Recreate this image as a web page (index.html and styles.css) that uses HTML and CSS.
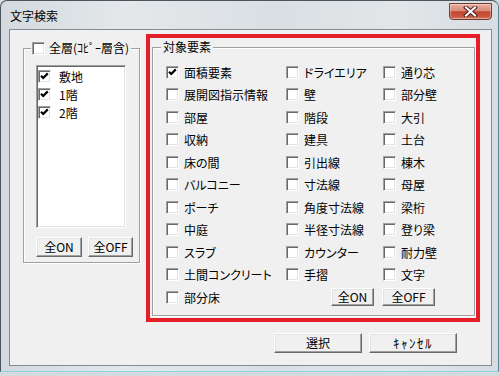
FILE: index.html
```html
<!DOCTYPE html>
<html lang="ja">
<head>
  <meta charset="UTF-8">
  <title>文字検索</title>
  <link rel="stylesheet" href="styles.css">
</head>
<body>
<div class="window">
  <div class="titlebar">
    <span class="title">文字検索</span>
    <button class="close" aria-label="閉じる">
      <svg width="15" height="11" viewBox="0 0 15 11">
        <path d="M3 1.5l9 8M12 1.5l-9 8" stroke="#4a2420" stroke-width="4" stroke-linecap="square" fill="none"/>
        <path d="M3 1.5l9 8M12 1.5l-9 8" stroke="#fff" stroke-width="2" stroke-linecap="square" fill="none"/>
      </svg>
    </button>
  </div>

  <div class="client">
    <div class="main">
      <fieldset class="group floors">
        <legend><span class="cb"></span>全層(ｺﾋﾟｰ層含)</legend>
        <ul class="listbox">
          <li><span class="cb on"><svg viewBox="0 0 11 11"><path d="M2 4.8l2.2 2.2 4.6-4.6" stroke="#000" stroke-width="2.2" fill="none"/></svg></span>敷地</li>
          <li><span class="cb on"><svg viewBox="0 0 11 11"><path d="M2 4.8l2.2 2.2 4.6-4.6" stroke="#000" stroke-width="2.2" fill="none"/></svg></span>1階</li>
          <li><span class="cb on"><svg viewBox="0 0 11 11"><path d="M2 4.8l2.2 2.2 4.6-4.6" stroke="#000" stroke-width="2.2" fill="none"/></svg></span>2階</li>
        </ul>
        <div class="btn-row">
          <button class="btn on-btn">全ON</button>
          <button class="btn off-btn">全OFF</button>
        </div>
      </fieldset>

      <div class="highlight">
        <fieldset class="group targets">
          <legend>対象要素</legend>
          <div class="grid">
            <label class="item"><span class="cb on"><svg viewBox="0 0 11 11"><path d="M2 4.8l2.2 2.2 4.6-4.6" stroke="#000" stroke-width="2.2" fill="none"/></svg></span>面積要素</label>
            <label class="item"><span class="cb"></span>ドライエリア</label>
            <label class="item"><span class="cb"></span>通り芯</label>

            <label class="item"><span class="cb"></span>展開図指示情報</label>
            <label class="item"><span class="cb"></span>壁</label>
            <label class="item"><span class="cb"></span>部分壁</label>

            <label class="item"><span class="cb"></span>部屋</label>
            <label class="item"><span class="cb"></span>階段</label>
            <label class="item"><span class="cb"></span>大引</label>

            <label class="item"><span class="cb"></span>収納</label>
            <label class="item"><span class="cb"></span>建具</label>
            <label class="item"><span class="cb"></span>土台</label>

            <label class="item"><span class="cb"></span>床の間</label>
            <label class="item"><span class="cb"></span>引出線</label>
            <label class="item"><span class="cb"></span>棟木</label>

            <label class="item"><span class="cb"></span>バルコニー</label>
            <label class="item"><span class="cb"></span>寸法線</label>
            <label class="item"><span class="cb"></span>母屋</label>

            <label class="item"><span class="cb"></span>ポーチ</label>
            <label class="item"><span class="cb"></span>角度寸法線</label>
            <label class="item"><span class="cb"></span>梁桁</label>

            <label class="item"><span class="cb"></span>中庭</label>
            <label class="item"><span class="cb"></span>半径寸法線</label>
            <label class="item"><span class="cb"></span>登り梁</label>

            <label class="item"><span class="cb"></span>スラブ</label>
            <label class="item"><span class="cb"></span>カウンター</label>
            <label class="item"><span class="cb"></span>耐力壁</label>

            <label class="item"><span class="cb"></span>土間コンクリート</label>
            <label class="item"><span class="cb"></span>手摺</label>
            <label class="item"><span class="cb"></span>文字</label>

            <label class="item"><span class="cb"></span>部分床</label>
            <div class="grid-btns">
              <button class="btn small-on">全ON</button>
              <button class="btn small-off">全OFF</button>
            </div>
          </div>
        </fieldset>
      </div>
    </div>

    <div class="actions">
      <button class="btn wide">選択</button>
      <button class="btn wide cancel">ｷｬﾝｾﾙ</button>
    </div>
  </div>
</div>
</body>
</html>
```

FILE: styles.css
```css
body {
  margin: 0;
  background-color: #d6dadd;
  font-family: "Noto Sans CJK JP", sans-serif;
  font-size: 12px;
  color: #000;
}
.window {
  width: 499px;
  height: 372px;
  box-sizing: border-box;
  border: 1px solid #4a555e;
  border-bottom-color: #8fd3e6;
  border-right-color: #5b7f95;
  border-radius: 7px 7px 0 0;
  padding: 0 6px 5px 8px;
  display: flex;
  flex-direction: column;
  background: linear-gradient(to right, #d3d9de, #e4e8eb 25%, #dadfe3 55%, #e2e6e9 80%, #d6dce1);
}
.titlebar {
  height: 28px;
  display: flex;
  align-items: center;
  justify-content: space-between;
}
.title {
  margin-left: 1px;
  margin-top: 1px;
  font-size: 12px;
  line-height: 14px;
  font-feature-settings: "palt";
}
.close {
  align-self: flex-start;
  margin-top: 2px;
  width: 43px;
  height: 17px;
  padding: 0;
  border: 1px solid #6e3a33;
  border-radius: 0 0 4px 4px;
  background: linear-gradient(#eab0a2, #d98a77 45%, #c4462f 52%, #c9583f 85%, #d8806a);
  box-shadow: inset 0 0 0 1px rgba(255, 255, 255, 0.35);
  display: flex;
  align-items: center;
  justify-content: center;
}
.client {
  flex: 1;
  background-color: #f0f0f0;
  border: 1px solid #838b92;
  display: flex;
  flex-direction: column;
}
.main {
  display: flex;
  align-items: flex-start;
  padding: 4px 0 0 13px;
  gap: 6px;
}

/* group boxes */
.group {
  margin: 0;
  border: 1px solid #a0a0a0;
  box-shadow: inset 1px 1px #fff, 1px 1px #fff;
}
.group legend {
  background-color: #f0f0f0;
  line-height: 14px;
  height: 14px;
  font-feature-settings: "palt";
}
.floors {
  margin-top: 7px;
  width: 117px;
  box-sizing: border-box;
  padding: 10px 6px 5px 12px;
}
.floors legend {
  display: flex;
  align-items: center;
  gap: 4px;
  padding: 0 2px 0 1px;
  margin-left: -5px;
}
.listbox {
  list-style: none;
  margin: 0;
  padding: 1px 0 0 1px;
  width: 90px;
  height: 163px;
  box-sizing: border-box;
  background-color: #fff;
  border: 1px solid;
  border-color: #a0a0a0 #fff #fff #a0a0a0;
  box-shadow: inset 1px 1px #696969, inset -1px -1px #e3e3e3;
}
.listbox li {
  height: 18px;
  display: flex;
  align-items: center;
  gap: 8px;
}
.btn-row {
  display: flex;
  gap: 6px;
  margin-top: 9px;
}

/* checkbox */
.cb {
  display: inline-flex;
  flex: none;
  width: 13px;
  height: 13px;
  box-sizing: border-box;
  background-color: #fff;
  border: 1px solid;
  border-color: #a0a0a0 #fff #fff #a0a0a0;
  box-shadow: inset 1px 1px #696969, inset -1px -1px #e3e3e3;
}
.cb svg {
  width: 11px;
  height: 11px;
}

/* buttons */
.btn {
  font-family: "Noto Sans CJK JP", sans-serif;
  font-size: 12px;
  line-height: 14px;
  color: #000;
  height: 20px;
  padding: 0;
  background-color: #f0f0f0;
  border: 1px solid;
  border-color: #fff #696969 #696969 #fff;
  box-shadow: inset -1px -1px #a0a0a0, inset 1px 1px #e3e3e3;
}
.on-btn {
  width: 46px;
}
.off-btn {
  width: 45px;
}

/* red highlight around 対象要素 */
.highlight {
  width: 334px;
  height: 288px;
  box-sizing: border-box;
  border: 4px solid #e51f27;
  padding: 2px 1px 0 2px;
}
.targets {
  padding: 7px 0 6px 13px;
  height: 276px;
  box-sizing: border-box;
}
.targets legend {
  padding: 0 2px;
  margin-left: -5px;
}
.grid {
  display: grid;
  grid-template-columns: 120px 97px 1fr;
  grid-auto-rows: 22.5px;
}
.item {
  display: flex;
  align-items: center;
  gap: 5px;
  white-space: nowrap;
  font-feature-settings: "palt";
}
.grid-btns {
  grid-column: 2 / 4;
  display: flex;
  align-items: center;
  gap: 8px;
  padding-left: 45px;
}
.grid-btns .btn {
  height: 18px;
}
.small-on {
  width: 43px;
}
.small-off {
  width: 53px;
}

.actions {
  display: flex;
  justify-content: flex-end;
  gap: 7px;
  padding-right: 34px;
  margin-top: 11px;
}
.wide {
  width: 88px;
}
.cancel {
  font-size: 13px;
  letter-spacing: 1.5px;
}
```
